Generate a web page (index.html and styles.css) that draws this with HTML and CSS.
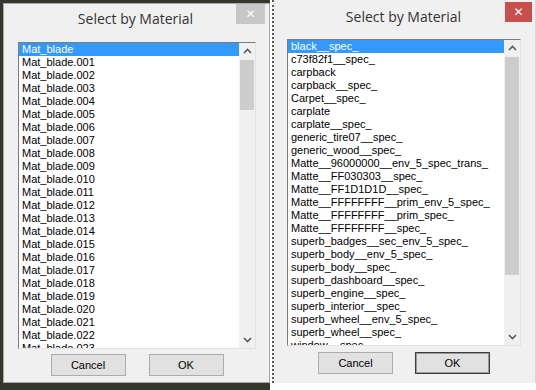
FILE: index.html
```html
<!DOCTYPE html>
<html>
	<head>
		<title>Select by Material</title>
		<link rel="stylesheet" href="styles.css">
	</head>
	<body>
		<div class="screen">
			<div class="desk">
				<div class="dialog inactive">
					<div class="titlebar">
						<span class="title">Select by Material</span>
						<span class="close">&#x2715;</span>
					</div>
					<div class="content">
						<div class="listbox">
							<div class="items">
								<div class="item selected">Mat_blade</div>
								<div class="item">Mat_blade.001</div>
								<div class="item">Mat_blade.002</div>
								<div class="item">Mat_blade.003</div>
								<div class="item">Mat_blade.004</div>
								<div class="item">Mat_blade.005</div>
								<div class="item">Mat_blade.006</div>
								<div class="item">Mat_blade.007</div>
								<div class="item">Mat_blade.008</div>
								<div class="item">Mat_blade.009</div>
								<div class="item">Mat_blade.010</div>
								<div class="item">Mat_blade.011</div>
								<div class="item">Mat_blade.012</div>
								<div class="item">Mat_blade.013</div>
								<div class="item">Mat_blade.014</div>
								<div class="item">Mat_blade.015</div>
								<div class="item">Mat_blade.016</div>
								<div class="item">Mat_blade.017</div>
								<div class="item">Mat_blade.018</div>
								<div class="item">Mat_blade.019</div>
								<div class="item">Mat_blade.020</div>
								<div class="item">Mat_blade.021</div>
								<div class="item">Mat_blade.022</div>
								<div class="item">Mat_blade.023</div>
							</div>
							<div class="scrollbar">
								<div class="arrow"><svg width="9" height="6" viewBox="0 0 9 6"><polyline points="1,5 4.5,1.5 8,5" fill="none" stroke="#5a5a5a" stroke-width="1.6"/></svg></div>
								<div class="track"><div class="thumb small"></div></div>
								<div class="arrow"><svg width="9" height="6" viewBox="0 0 9 6"><polyline points="1,1 4.5,4.5 8,1" fill="none" stroke="#5a5a5a" stroke-width="1.6"/></svg></div>
							</div>
						</div>
						<div class="buttons">
							<button class="button">Cancel</button>
							<button class="button">OK</button>
						</div>
					</div>
				</div>
			</div>
			<div class="dialog active">
				<div class="titlebar">
					<span class="title">Select by Material</span>
					<span class="close">&#x2715;</span>
				</div>
				<div class="content">
					<div class="listbox">
						<div class="items">
							<div class="item selected">black__spec_</div>
							<div class="item">c73f82f1__spec_</div>
							<div class="item">carpback</div>
							<div class="item">carpback__spec_</div>
							<div class="item">Carpet__spec_</div>
							<div class="item">carplate</div>
							<div class="item">carplate__spec_</div>
							<div class="item">generic_tire07__spec_</div>
							<div class="item">generic_wood__spec_</div>
							<div class="item">Matte__96000000__env_5_spec_trans_</div>
							<div class="item">Matte__FF030303__spec_</div>
							<div class="item">Matte__FF1D1D1D__spec_</div>
							<div class="item">Matte__FFFFFFFF__prim_env_5_spec_</div>
							<div class="item">Matte__FFFFFFFF__prim_spec_</div>
							<div class="item">Matte__FFFFFFFF__spec_</div>
							<div class="item">superb_badges__sec_env_5_spec_</div>
							<div class="item">superb_body__env_5_spec_</div>
							<div class="item">superb_body__spec_</div>
							<div class="item">superb_dashboard__spec_</div>
							<div class="item">superb_engine__spec_</div>
							<div class="item">superb_interior__spec_</div>
							<div class="item">superb_wheel__env_5_spec_</div>
							<div class="item">superb_wheel__spec_</div>
							<div class="item">window__spec_</div>
						</div>
						<div class="scrollbar">
							<div class="arrow"><svg width="9" height="6" viewBox="0 0 9 6"><polyline points="1,5 4.5,1.5 8,5" fill="none" stroke="#5a5a5a" stroke-width="1.6"/></svg></div>
							<div class="track"><div class="thumb large"></div></div>
							<div class="arrow"><svg width="9" height="6" viewBox="0 0 9 6"><polyline points="1,1 4.5,4.5 8,1" fill="none" stroke="#5a5a5a" stroke-width="1.6"/></svg></div>
						</div>
					</div>
					<div class="buttons">
						<button class="button">Cancel</button>
						<button class="button default">OK</button>
					</div>
				</div>
			</div>
		</div>
	</body>
</html>
```

FILE: styles.css
```css
body {
margin: 0;
background-color: white;
font-family: "Liberation Sans", Arial, sans-serif;
}

.screen {
display: flex;
width: 536px;
height: 390px;
overflow: hidden;
}

.desk {
width: 270px;
height: 390px;
box-sizing: border-box;
padding: 3px 0 7px 3px;
background-color: #34372c;
}

.dialog {
display: flex;
flex-direction: column;
box-sizing: border-box;
background-color: #f0f0f0;
}

.dialog.inactive {
width: 267px;
height: 380px;
border: 1px solid #a9a9a9;
}

.dialog.active {
width: 264px;
height: 383px;
margin-left: 2px;
border-left: 2px dotted #5a5a5a;
border-right: 1px solid #d6d6d6;
}

.titlebar {
position: relative;
display: flex;
align-items: center;
justify-content: center;
height: 28px;
}

.active .titlebar {
height: 32px;
}

.title {
font-family: "Open Sans", "Noto Sans", sans-serif;
font-size: 14px;
color: #333333;
padding-right: 2px;
}

.close {
position: absolute;
top: 0;
right: 4px;
width: 29px;
height: 20px;
display: flex;
align-items: center;
justify-content: center;
color: white;
font-size: 12px;
font-family: "DejaVu Sans", sans-serif;
background-color: #c7c7c7;
}

.active .close {
top: 2px;
right: 3px;
width: 27px;
background-color: #c94f4f;
}

.content {
display: flex;
flex-direction: column;
padding: 10px 13px 0 14px;
}

.active .content {
padding: 7px 14px 0 13px;
}

.listbox {
display: flex;
height: 307px;
background-color: white;
border-top: 1px solid #7c7c7c;
border-left: 1px solid #7c7c7c;
border-right: 1px solid #e3e3e3;
border-bottom: 1px solid #e3e3e3;
box-sizing: border-box;
overflow: hidden;
}

.items {
flex: 1;
overflow: hidden;
}

.item {
height: 13px;
line-height: 13px;
font-size: 11px;
padding-left: 3px;
color: black;
white-space: nowrap;
}

.item.selected {
background-color: #3399ff;
color: white;
}

.scrollbar {
width: 16px;
display: flex;
flex-direction: column;
background-color: #f0f0f0;
}

.arrow {
height: 16px;
display: flex;
align-items: center;
justify-content: center;
}

.track {
flex: 1;
padding: 1px 1px 0 1px;
}

.thumb {
background-color: #cdcdcd;
}

.thumb.small {
height: 50px;
}

.thumb.large {
height: 218px;
}

.buttons {
display: flex;
justify-content: center;
gap: 23px;
padding-top: 5px;
}

.active .buttons {
gap: 22px;
padding-top: 6px;
}

.button {
width: 75px;
height: 22px;
font-family: "Liberation Sans", Arial, sans-serif;
font-size: 11px;
color: black;
background-color: #e1e1e1;
border: 1px solid #adadad;
padding: 0;
}

.button.default {
border: 1px solid #3c3c3c;
box-shadow: inset 0 0 0 1px #9a9a9a;
}
```
